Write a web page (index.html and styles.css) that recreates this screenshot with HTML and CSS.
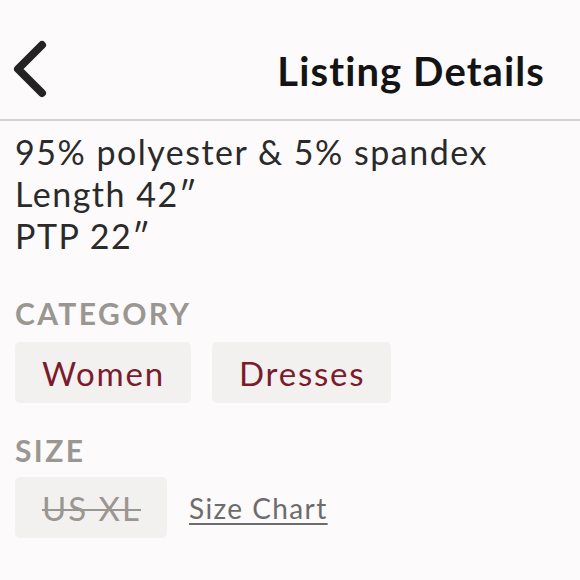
FILE: index.html
```html
<!DOCTYPE html>
<html>
<head>
<meta charset="utf-8">
<link rel="stylesheet" href="styles.css">
</head>
<body>
<div class="page">
  <header class="header">
    <svg class="back" width="40" height="60" viewBox="0 0 40 60">
      <path d="M30 5 L6 29 L30 53" fill="none" stroke="#232323" stroke-width="8" stroke-linecap="round" stroke-linejoin="round"/>
    </svg>
    <h1 class="title">Listing Details</h1>
  </header>
  <main class="content">
    <div class="desc">
      <div>95% polyester &amp; 5% spandex</div>
      <div>Length 42″</div>
      <div>PTP 22″</div>
    </div>
    <div class="label cat-label">CATEGORY</div>
    <div class="chips">
      <span class="chip chip-link">Women</span>
      <span class="chip chip-link">Dresses</span>
    </div>
    <div class="label size-label">SIZE</div>
    <div class="chips size-row">
      <span class="chip chip-off">US XL</span>
      <span class="size-chart">Size Chart</span>
    </div>
  </main>
</div>
</body>
</html>
```
FILE: styles.css
```css
html, body {
  margin: 0;
  padding: 0;
  background: #fcfafb;
}
body {
  font-family: Lato, "Noto Sans", sans-serif;
  width: 580px;
  height: 580px;
  overflow: hidden;
}
.header {
  height: 119px;
  border-bottom: 2px solid #d3d1d1;
  display: flex;
  align-items: center;
  justify-content: space-between;
  padding: 0 35px 0 12px;
  box-sizing: content-box;
}
.back {
  display: block;
  margin-top: 20px;
}
.title {
  margin: 0;
  font-size: 40px;
  font-weight: 700;
  color: #141414;
  letter-spacing: 1.1px;
  margin-top: 22px;
}
.content {
  padding: 10px 15px 0 15px;
}
.desc {
  font-size: 34px;
  line-height: 42px;
  letter-spacing: 1.5px;
  color: #2a2a2a;
}
.label {
  font-size: 30px;
  font-weight: 700;
  color: #9a9692;
  line-height: 34px;
  letter-spacing: 2.4px;
}
.cat-label {
  margin-top: 39px;
}
.chips {
  display: flex;
  align-items: center;
  gap: 21px;
  margin-top: 12px;
}
.chip {
  background: #f3f1ef;
  border-radius: 5px;
  height: 61px;
  padding: 0 26px 0 27px;
  display: flex;
  align-items: center;
  font-size: 33px;
  letter-spacing: 1.8px;
}
.chip-link {
  color: #7b1b2d;
}
.chip-off {
  color: #9a9692;
  text-decoration: line-through;
  text-decoration-thickness: 2px;
  letter-spacing: 2px;
}
.size-label {
  margin-top: 30px;
}
.size-row {
  gap: 22px;
  margin-top: 10px;
}
.size-chart {
  font-size: 28px;
  color: #6c6c6c;
  letter-spacing: 1.4px;
  text-decoration: underline;
  text-decoration-thickness: 2px;
  text-underline-offset: 4px;
}
```
